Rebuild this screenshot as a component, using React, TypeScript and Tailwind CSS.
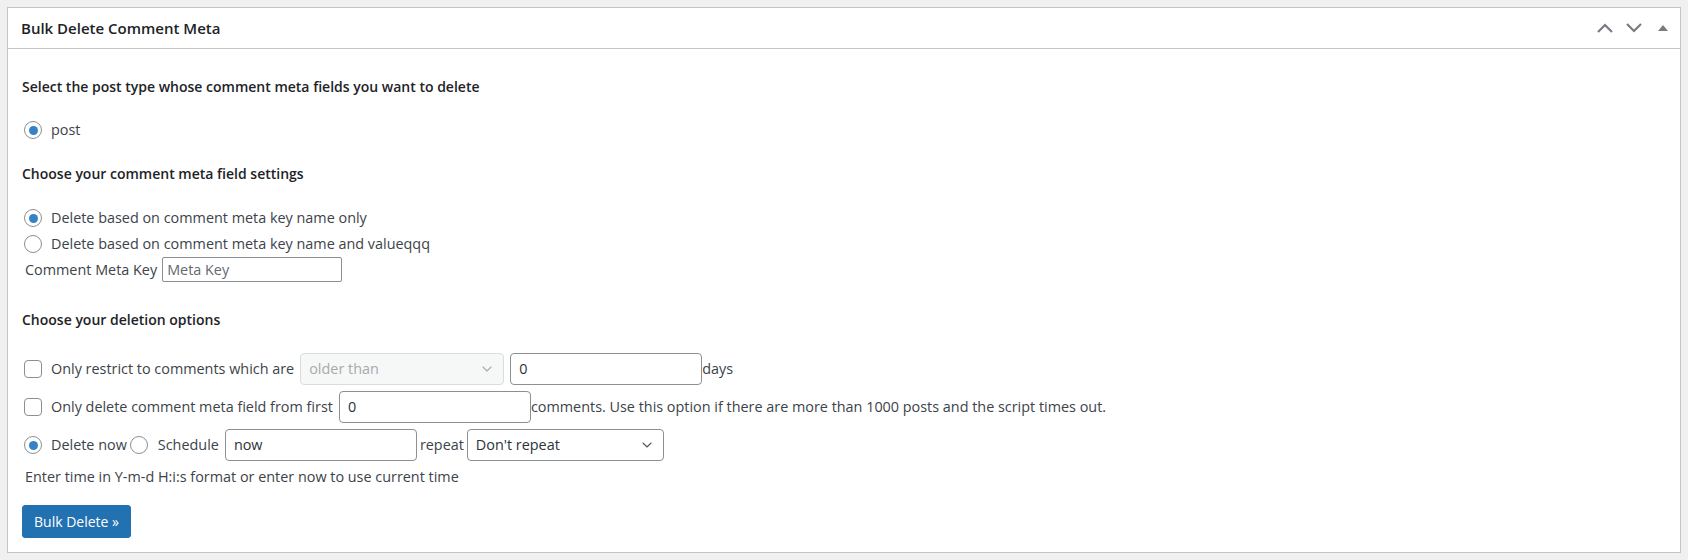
import { ChevronDown } from "lucide-react";

function Radio({ checked }: { checked?: boolean }) {
  return (
    <span className="flex h-[18px] w-[18px] shrink-0 items-center justify-center rounded-full border border-[#8c8f94] bg-white">
      {checked && <span className="h-[9px] w-[9px] rounded-full bg-[#3582c4]" />}
    </span>
  );
}

function Checkbox() {
  return (
    <span className="block h-[18px] w-[18px] shrink-0 rounded-[4px] border border-[#8c8f94] bg-white" />
  );
}

function Select({
  value,
  disabled,
  className,
}: {
  value: string;
  disabled?: boolean;
  className: string;
}) {
  return (
    <div
      className={`flex h-full items-center justify-between rounded-[4px] border pl-2 pr-2 ${
        disabled
          ? "border-[#dcdcde] bg-[#f6f7f7] text-[#a7aaad]"
          : "border-[#8c8f94] bg-white text-[#2c3338]"
      } ${className}`}
    >
      <span>{value}</span>
      <ChevronDown
        size={16}
        strokeWidth={1.6}
        className={disabled ? "text-[#a7aaad]" : "text-[#50575e]"}
      />
    </div>
  );
}

function TextInput({
  value,
  placeholder,
  className,
}: {
  value?: string;
  placeholder?: string;
  className: string;
}) {
  return (
    <div
      className={`flex h-full items-center border border-[#8c8f94] bg-white px-2 ${className}`}
    >
      {value ? (
        <span className="text-[#2c3338]">{value}</span>
      ) : (
        <span className="text-[#646970]">{placeholder}</span>
      )}
    </div>
  );
}

export default function App() {
  return (
    <div
      className="min-h-[560px] bg-[#f0f0f1] p-[7px] text-[14.4px] text-[#3c434a]"
      style={{ fontFamily: '"Open Sans", "Noto Sans", sans-serif' }}
    >
      <div className="flex flex-col border border-[#c3c4c7] bg-white">
        {/* header */}
        <div className="flex h-[41px] items-center justify-between border-b border-[#c3c4c7] pl-[13px] pr-[10px]">
          <h2 className="text-[15px] font-semibold text-[#1d2327]">
            Bulk Delete Comment Meta
          </h2>
          <div className="flex items-center text-[#787c82]">
            <svg width="18" height="12" viewBox="0 0 18 12" className="mr-[11px]">
              <polyline
                points="2,10 9,3 16,10"
                fill="none"
                stroke="currentColor"
                strokeWidth="2.2"
              />
            </svg>
            <svg width="18" height="12" viewBox="0 0 18 12" className="mr-[15px]">
              <polyline
                points="2,2 9,9 16,2"
                fill="none"
                stroke="currentColor"
                strokeWidth="2.2"
              />
            </svg>
            <svg width="10" height="6" viewBox="0 0 10 6" className="mr-[2px]">
              <polygon points="0,6 5,0 10,6" fill="currentColor" />
            </svg>
          </div>
        </div>

        {/* body */}
        <div className="flex flex-col px-[14px] pb-[14px]">
          <h3 className="mt-[27px] flex h-[20px] items-center text-[14px] font-semibold text-[#1d2327]">
            Select the post type whose comment meta fields you want to delete
          </h3>

          <label className="mt-[24px] flex h-[20px] items-center gap-[9px] pl-[2px]">
            <Radio checked />
            <span>post</span>
          </label>

          <h3 className="mt-[23px] flex h-[20px] items-center text-[14px] font-semibold text-[#1d2327]">
            Choose your comment meta field settings
          </h3>

          <label className="mt-[25px] flex h-[20px] items-center gap-[9px] pl-[2px]">
            <Radio checked />
            <span>Delete based on comment meta key name only</span>
          </label>
          <label className="mt-[6px] flex h-[20px] items-center gap-[9px] pl-[2px]">
            <Radio />
            <span>Delete based on comment meta key name and valueqqq</span>
          </label>

          <div className="mt-[3px] flex h-[25px] items-center gap-[5px] pl-[3px]">
            <span>Comment Meta Key</span>
            <TextInput placeholder="Meta Key" className="w-[180px] rounded-[2px] px-[4px]" />
          </div>

          <h3 className="mt-[27px] flex h-[20px] items-center text-[14px] font-semibold text-[#1d2327]">
            Choose your deletion options
          </h3>

          <div className="mt-[24px] flex h-[32px] items-center pl-[2px]">
            <Checkbox />
            <span className="ml-[9px] mr-[6px]">Only restrict to comments which are</span>
            <Select value="older than" disabled className="w-[204px]" />
            <TextInput value="0" className="ml-[6px] w-[192px] rounded-[4px]" />
            <span>days</span>
          </div>

          <div className="mt-[6px] flex h-[32px] items-center pl-[2px]">
            <Checkbox />
            <span className="ml-[9px] mr-[6px]">Only delete comment meta field from first</span>
            <TextInput value="0" className="w-[192px] rounded-[4px]" />
            <span>
              comments. Use this option if there are more than 1000 posts and the script times out.
            </span>
          </div>

          <div className="mt-[6px] flex h-[32px] items-center pl-[2px]">
            <Radio checked />
            <span className="ml-[9px] mr-[3px]">Delete now</span>
            <Radio />
            <span className="ml-[10px] mr-[6px]">Schedule</span>
            <TextInput value="now" className="w-[192px] rounded-[4px]" />
            <span className="mx-[3px]">repeat</span>
            <Select value="Don't repeat" className="w-[197px]" />
          </div>

          <p className="mt-[6px] flex h-[20px] items-center pl-[3px]">
            Enter time in Y-m-d H:i:s format or enter now to use current time
          </p>

          <div className="mt-[18px] flex">
            <button className="h-[33px] rounded-[3px] border border-[#2271b1] bg-[#2271b1] px-[11px] text-[14px] text-white">
              Bulk Delete »
            </button>
          </div>
        </div>
      </div>
    </div>
  );
}
